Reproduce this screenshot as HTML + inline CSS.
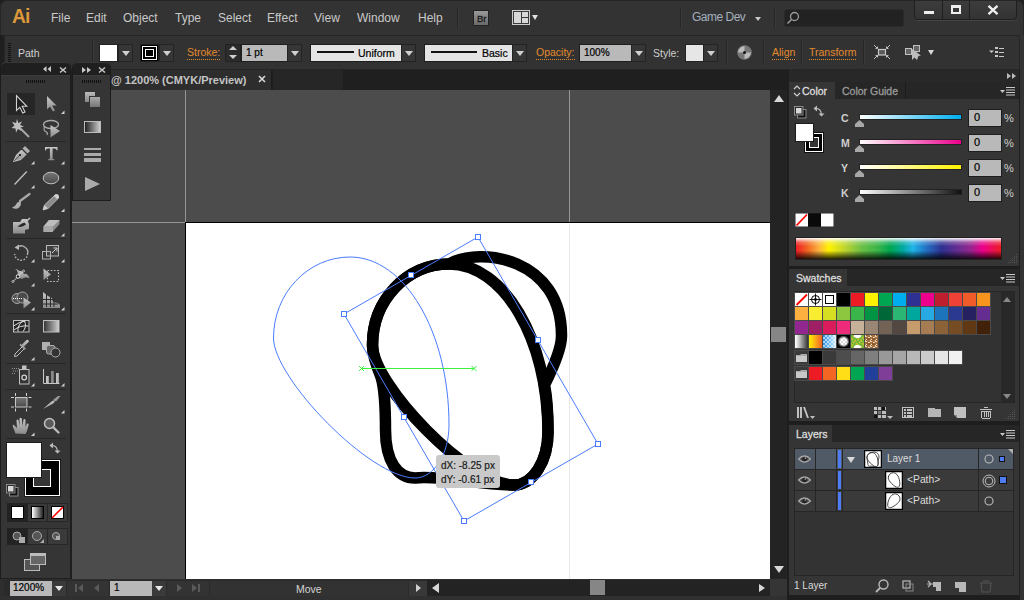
<!DOCTYPE html>
<html><head><meta charset="utf-8">
<style>
*{margin:0;padding:0;box-sizing:border-box}
html,body{width:1024px;height:600px;overflow:hidden;background:#1f1f1f;font-family:"Liberation Sans",sans-serif;font-size:11px;color:#d6d6d6}
.a{position:absolute}
.t{position:absolute;white-space:nowrap;line-height:1}
.m{font-size:12px;color:#c9c9c9;top:12px}
.sep{position:absolute;width:1px;background:#262626;box-shadow:1px 0 0 #3a3a3a}
.dd{position:absolute;width:15px;height:18px;background:#363636;border:1px solid #232323}
.dd:after{content:"";position:absolute;left:3px;top:6px;border-left:4px solid transparent;border-right:4px solid transparent;border-top:5px solid #d0d0d0}
.or{color:#e48a2e;border-bottom:1px dotted #e48a2e;padding-bottom:1px;font-size:10.5px!important}
.inp{position:absolute;height:18px;background:#b9b9b9;border:1px solid #1e1e1e;color:#000;font-size:10px;padding:3px 0 0 4px;line-height:1;-webkit-text-stroke:0.2px #000}
.ic{position:absolute}
</style></head><body>
<!-- APP BAR -->
<div class="a" style="left:0;top:0;width:1024px;height:35px;background:#333;border-radius:7px 7px 0 0;border:1px solid #262626;border-bottom:none"></div>
<div class="t" style="left:12px;top:5px;font-size:21px;font-weight:bold;color:#dc983a;letter-spacing:-1px;transform:scaleX(0.92);transform-origin:left">Ai</div>
<div class="t m" style="left:51px">File</div>
<div class="t m" style="left:86px">Edit</div>
<div class="t m" style="left:123px">Object</div>
<div class="t m" style="left:175px">Type</div>
<div class="t m" style="left:218px">Select</div>
<div class="t m" style="left:267px">Effect</div>
<div class="t m" style="left:314px">View</div>
<div class="t m" style="left:357px">Window</div>
<div class="t m" style="left:418px">Help</div>
<div class="sep" style="left:457px;top:8px;height:20px"></div>
<div class="a" style="left:473px;top:10px;width:16px;height:16px;background:linear-gradient(#9a9a9a,#6a6a6a);border:1px solid #222;border-radius:1px"></div>
<div class="t" style="left:477px;top:14px;font-size:9.5px;color:#1a1a1a;-webkit-text-stroke:0.3px #1a1a1a">Br</div>
<div class="a" style="left:512px;top:10px;width:18px;height:15px;border:1px solid #ccc;background:#3a3a3a"></div>
<div class="a" style="left:514px;top:12px;width:7px;height:11px;background:#d8d8d8"></div>
<div class="a" style="left:522px;top:12px;width:6px;height:5px;background:#d8d8d8"></div>
<div class="a" style="left:522px;top:18px;width:6px;height:5px;background:#d8d8d8"></div>
<div class="a" style="left:532px;top:15px;border-left:3.5px solid transparent;border-right:3.5px solid transparent;border-top:5px solid #e0e0e0"></div>
<div class="sep" style="left:680px;top:8px;height:20px"></div>
<div class="t" style="left:692px;top:11px;font-size:12px;color:#a3afbd;letter-spacing:-0.5px">Game Dev</div>
<div class="a" style="left:755px;top:17px;border-left:3.5px solid transparent;border-right:3.5px solid transparent;border-top:4px solid #c8c8c8"></div>
<div class="sep" style="left:774px;top:8px;height:20px"></div>
<div class="a" style="left:784px;top:9px;width:120px;height:18px;background:#222;border-radius:3px;border:1px solid #2a2a2a"></div>
<svg class="ic" style="left:786px;top:11px" width="14" height="14"><circle cx="8.5" cy="5.5" r="4" fill="none" stroke="#9a9a9a" stroke-width="1.3"/><line x1="5.5" y1="8.5" x2="1.5" y2="12.5" stroke="#9a9a9a" stroke-width="1.6"/></svg>
<div class="a" style="left:914px;top:0px;width:103px;height:20px;background:linear-gradient(#3c3c3c,#333);border:1px solid #1f1f1f;border-top-color:#262626;border-radius:0 0 4px 4px;box-shadow:0 1px 0 #444"></div>
<div class="a" style="left:942px;top:0;width:1px;height:19px;background:#1f1f1f"></div>
<div class="a" style="left:969px;top:0;width:1px;height:19px;background:#1f1f1f"></div>
<div class="a" style="left:924px;top:11px;width:10px;height:3px;background:#eee"></div>
<div class="a" style="left:951px;top:5px;width:10px;height:9px;border:2px solid #eee;border-top-width:3px"></div>
<svg class="ic" style="left:987px;top:5px" width="12" height="10"><path d="M1.5 0.8 L10.5 9.2 M10.5 0.8 L1.5 9.2" stroke="#eee" stroke-width="2.3"/></svg>
<!-- CONTROL BAR -->
<div class="a" style="left:4px;top:35px;width:1016px;height:35px;background:#323232;border:1px solid #262626"></div>
<div class="a" style="left:8px;top:43px;width:3px;height:20px;background:repeating-linear-gradient(#111 0 1px,transparent 1px 2px)"></div>
<div class="t" style="left:18px;top:48px;font-size:10.5px;color:#cfcfcf">Path</div>
<div class="sep" style="left:92px;top:40px;height:25px"></div>
<div class="a" style="left:99px;top:44px;width:19px;height:18px;background:#fff;border:1px solid #222"></div>
<div class="dd" style="left:118px;top:44px"></div>
<div class="a" style="left:140px;top:44px;width:19px;height:18px;background:#000;border:1px solid #222"></div>
<div class="a" style="left:142px;top:46px;width:15px;height:14px;border:1px solid #fff"></div>
<div class="a" style="left:145px;top:49px;width:9px;height:8px;border:1px solid #fff"></div>
<div class="dd" style="left:159px;top:44px"></div>
<div class="t or" style="left:187px;top:47px;">Stroke:</div>
<div class="a" style="left:225px;top:44px;width:16px;height:18px;background:#2b2b2b;border:1px solid #222"></div>
<div class="a" style="left:229px;top:46px;border-left:4px solid transparent;border-right:4px solid transparent;border-bottom:4px solid #cfcfcf"></div>
<div class="a" style="left:229px;top:55px;border-left:4px solid transparent;border-right:4px solid transparent;border-top:4px solid #cfcfcf"></div>
<div class="inp" style="left:241px;top:44px;width:47px;padding-top:3px">1 pt</div>
<div class="dd" style="left:287px;top:44px"></div>
<div class="a" style="left:310px;top:44px;width:92px;height:18px;background:#e4e4e4;border:1px solid #1e1e1e"></div>
<div class="a" style="left:317px;top:51px;width:37px;height:2px;background:#111"></div>
<div class="t" style="left:358px;top:48px;font-size:10.5px;color:#000;-webkit-text-stroke:0.2px #000">Uniform</div>
<div class="dd" style="left:401px;top:44px"></div>
<div class="a" style="left:424px;top:44px;width:89px;height:18px;background:#e4e4e4;border:1px solid #1e1e1e"></div>
<div class="a" style="left:431px;top:51px;width:46px;height:2px;background:#111"></div>
<div class="t" style="left:482px;top:48px;font-size:10.5px;color:#000;-webkit-text-stroke:0.2px #000">Basic</div>
<div class="dd" style="left:512px;top:44px"></div>
<div class="t or" style="left:536px;top:47px;">Opacity:</div>
<div class="inp" style="left:579px;top:44px;width:53px">100%</div>
<div class="dd" style="left:631px;top:44px"></div>
<div class="t" style="left:653px;top:48px;font-size:10.5px;color:#cfcfcf">Style:</div>
<div class="a" style="left:685px;top:44px;width:19px;height:18px;background:#e6e6e6;border:1px solid #222"></div>
<div class="dd" style="left:703px;top:44px"></div>
<div class="sep" style="left:726px;top:40px;height:25px"></div>
<svg class="ic" style="left:736px;top:44px" width="17" height="17"><defs><radialGradient id="rc"><stop offset="0" stop-color="#333"/><stop offset="1" stop-color="#ddd"/></radialGradient></defs><circle cx="8.5" cy="8.5" r="7" fill="#bbb" stroke="#555"/><path d="M8.5 1.5 A7 7 0 0 1 15.5 8.5 L8.5 8.5Z M8.5 15.5 A7 7 0 0 1 1.5 8.5 L8.5 8.5Z" fill="#777"/><circle cx="8.5" cy="8.5" r="1.5" fill="#111"/></svg>
<div class="sep" style="left:763px;top:40px;height:25px"></div>
<div class="t or" style="left:772px;top:47px;">Align</div>
<div class="sep" style="left:801px;top:40px;height:25px"></div>
<div class="t or" style="left:809px;top:47px;">Transform</div>
<div class="sep" style="left:863px;top:40px;height:25px"></div>
<svg class="ic" style="left:872px;top:43px" width="20" height="18"><rect x="6.5" y="6.5" width="7" height="5.5" fill="#5a5a5a" stroke="#c8c8c8" stroke-width="1.2"/><path d="M2 2 L5.5 5.5 M18 2 L14.5 5.5 M2 16 L5.5 12.5 M18 16 L14.5 12.5" stroke="#c0c0c0" stroke-width="1"/><path d="M3.5 5.5 H5.5 V3.5 M16.5 5.5 H14.5 V3.5 M3.5 12.5 H5.5 V14.5 M16.5 12.5 H14.5 V14.5" stroke="#c0c0c0" stroke-width="1" fill="none"/></svg>
<svg class="ic" style="left:904px;top:44px" width="18" height="17"><rect x="1.5" y="4.5" width="6" height="6" fill="#666" stroke="#c0c0c0"/><rect x="9.5" y="1.5" width="6" height="6" fill="#666" stroke="#c0c0c0"/><path d="M8 5 L8 16 L10.5 13.5 L13 16 L14.5 12 L17 11.5 Z" fill="#bdbdbd"/></svg>
<div class="a" style="left:928px;top:50px;border-left:3.5px solid transparent;border-right:3.5px solid transparent;border-top:5px solid #d8d8d8"></div>
<svg class="ic" style="left:988px;top:46px" width="16" height="12" shape-rendering="crispEdges"><path d="M1 4.5 L6 4.5 L3.5 7Z" fill="#c8c8c8" shape-rendering="auto"/><rect x="7" y="1" width="3" height="2" fill="#c8c8c8"/><rect x="7" y="5" width="3" height="2" fill="#c8c8c8"/><rect x="7" y="9" width="3" height="2" fill="#c8c8c8"/><rect x="11" y="1.5" width="5" height="1" fill="#c8c8c8"/><rect x="11" y="5.5" width="5" height="1" fill="#c8c8c8"/><rect x="11" y="9.5" width="5" height="1" fill="#c8c8c8"/></svg>
<!-- TAB BAR -->
<div class="a" style="left:72px;top:70px;width:715px;height:20px;background:#1f1f1f"></div>
<div class="a" style="left:72px;top:70px;width:200px;height:20px;background:#2d2d2d;border-right:1px solid #1b1b1b"></div>
<div class="a" style="left:273px;top:70px;width:70px;height:20px;background:#262626"></div>
<div class="t" style="left:111px;top:75px;font-size:11px;font-weight:bold;color:#c4c4c4">@ 1200% (CMYK/Preview)</div>
<svg class="ic" style="left:258px;top:75px" width="8" height="8"><path d="M1 1 L7 7 M7 1 L1 7" stroke="#d8d8d8" stroke-width="1.6"/></svg>
<!-- CANVAS -->
<div class="a" style="left:72px;top:90px;width:698px;height:489px;background:#4c4c4c;overflow:hidden">
  <div class="a" style="left:113px;top:132px;width:585px;height:357px;background:#fff;border-left:1px solid #000;border-top:1px solid #000"></div>
  <div class="a" style="left:113px;top:0;width:1px;height:132px;background:#959595"></div>
  <div class="a" style="left:0;top:132px;width:113px;height:1px;background:#959595"></div>
  <div class="a" style="left:497px;top:0;width:1px;height:132px;background:#959595"></div>
  <div class="a" style="left:497px;top:134px;width:1px;height:356px;background:#e8e8e8"></div>
</div>
<!-- VSCROLL -->
<div class="a" style="left:770px;top:90px;width:17px;height:489px;background:#232323"></div>
<div class="a" style="left:774px;top:95px;border-left:5px solid transparent;border-right:5px solid transparent;border-bottom:7px solid #d8d8d8"></div>
<div class="a" style="left:771px;top:327px;width:15px;height:15px;background:#868686"></div>
<div class="a" style="left:774px;top:566px;border-left:5px solid transparent;border-right:5px solid transparent;border-top:7px solid #d8d8d8"></div>
<!-- STATUS BAR -->
<div class="a" style="left:0;top:579px;width:787px;height:21px;background:#2e2e2e"></div>
<div class="a" style="left:0;top:596px;width:1024px;height:4px;background:#303030"></div>
<div class="a" style="left:4px;top:580px;width:423px;height:16px;background:#2a2a2a"></div>
<div class="inp" style="left:10px;top:581px;width:42px;height:15px;padding:2px 0 0 3px;border:none">1200%</div>
<div class="a" style="left:52px;top:581px;width:14px;height:15px;background:#3a3a3a"></div>
<div class="a" style="left:55px;top:586px;border-left:4px solid transparent;border-right:4px solid transparent;border-top:5px solid #e8e8e8"></div>
<div class="a" style="left:67px;top:581px;width:42px;height:15px;background:#333"></div>
<div class="a" style="left:75px;top:584px;width:2px;height:8px;background:#5a5a5a"></div>
<div class="a" style="left:78px;top:584px;border-top:4px solid transparent;border-bottom:4px solid transparent;border-right:5px solid #5a5a5a"></div>
<div class="a" style="left:94px;top:584px;border-top:4px solid transparent;border-bottom:4px solid transparent;border-right:5px solid #5a5a5a"></div>
<div class="inp" style="left:110px;top:581px;width:42px;height:15px;padding:2px 0 0 4px;border:none">1</div>
<div class="a" style="left:152px;top:581px;width:14px;height:15px;background:#3a3a3a"></div>
<div class="a" style="left:155px;top:586px;border-left:4px solid transparent;border-right:4px solid transparent;border-top:5px solid #e8e8e8"></div>
<div class="a" style="left:167px;top:581px;width:42px;height:15px;background:#333"></div>
<div class="a" style="left:177px;top:584px;border-top:4px solid transparent;border-bottom:4px solid transparent;border-left:5px solid #5a5a5a"></div>
<div class="a" style="left:192px;top:584px;border-top:4px solid transparent;border-bottom:4px solid transparent;border-left:5px solid #5a5a5a"></div>
<div class="a" style="left:198px;top:584px;width:2px;height:8px;background:#5a5a5a"></div>
<div class="a" style="left:210px;top:581px;width:198px;height:15px;background:#323232"></div>
<div class="t" style="left:296px;top:584px;font-size:10.5px;color:#d4d4d4">Move</div>
<div class="a" style="left:409px;top:581px;width:18px;height:15px;background:#383838"></div>
<div class="a" style="left:416px;top:584px;border-top:4px solid transparent;border-bottom:4px solid transparent;border-left:5px solid #cfcfcf"></div>
<div class="a" style="left:427px;top:580px;width:343px;height:16px;background:#232323"></div>
<div class="a" style="left:432px;top:583px;border-top:5px solid transparent;border-bottom:5px solid transparent;border-right:7px solid #d8d8d8"></div>
<div class="a" style="left:590px;top:580px;width:15px;height:15px;background:#868686"></div>
<div class="a" style="left:759px;top:584px;border-top:4px solid transparent;border-bottom:4px solid transparent;border-left:6px solid #d8d8d8"></div>
<div class="a" style="left:770px;top:579px;width:17px;height:17px;background:#353535"></div>
<svg class="a" style="left:72px;top:90px" width="698" height="489"><g transform="translate(-72,-90)">
<path d="M449 264 C480 246 562 258 561.5 336 C561.5 350 552 370 544.5 385 C546.5 395 548 418 548 432 C548 461.3 532.8 485 514 485 C480 485 440 475 415 478 C398 478 385.5 462 385.5 430 C385.5 408 385 390 381 377 C376 365 372.5 355 372.5 345 C372.5 300 406.8 264 449 264 Z" fill="none" stroke="#000" stroke-width="11.5"/>
<path d="M350 257 C404.7 257 449 332 449 425 C449 454.3 433.8 478 415 478 C370 478 273.5 378 273.5 338 C273.5 293.3 307.8 257 350 257 Z" transform="translate(99,7)" fill="none" stroke="#000" stroke-width="11.5"/>
<path d="M350 257 C404.7 257 449 332 449 425 C449 454.3 433.8 478 415 478 C370 478 273.5 378 273.5 338 C273.5 293.3 307.8 257 350 257 Z" fill="none" stroke="#4a7cff" stroke-width="1"/>
<path d="M344 314 L478 237 L598 444 L464 521Z" fill="none" stroke="#4a7cff" stroke-width="1"/>
<rect x="341.5" y="311.5" width="5" height="5" fill="#fff" stroke="#4a7cff" stroke-width="1"/>
<rect x="475.5" y="234.5" width="5" height="5" fill="#fff" stroke="#4a7cff" stroke-width="1"/>
<rect x="595.5" y="441.5" width="5" height="5" fill="#fff" stroke="#4a7cff" stroke-width="1"/>
<rect x="461.5" y="518.5" width="5" height="5" fill="#fff" stroke="#4a7cff" stroke-width="1"/>
<rect x="408.5" y="272.5" width="5" height="5" fill="#fff" stroke="#4a7cff" stroke-width="1"/>
<rect x="535.5" y="337.5" width="5" height="5" fill="#fff" stroke="#4a7cff" stroke-width="1"/>
<rect x="528.5" y="479.5" width="5" height="5" fill="#fff" stroke="#4a7cff" stroke-width="1"/>
<rect x="401.5" y="414.5" width="5" height="5" fill="#fff" stroke="#4a7cff" stroke-width="1"/>
<path d="M361 368.5 H474 M359 366 L364 371 M364 366 L359 371 M471.5 366 L476.5 371 M476.5 366 L471.5 371" stroke="#3cf03c" stroke-width="1"/>
</g></svg>
<div class="a" style="left:436px;top:455px;width:64px;height:33px;background:#c9c9c9;border-radius:3px"></div>
<div class="t" style="left:441px;top:459px;font-size:10px;color:#1a1a1a;line-height:14px;-webkit-text-stroke:0.2px #1a1a1a">dX: -8.25 px<br>dY: -0.61 px</div><!-- TOOLS PANEL -->
<div class="a" style="left:0;top:62px;width:71px;height:516px;background:#353535;border-right:1px solid #1c1c1c;border-left:1px solid #1c1c1c;border-radius:5px 5px 0 0"></div>
<div class="a" style="left:1px;top:62px;width:69px;height:14px;background:#1f1f1f;border-radius:5px 5px 0 0;border-top:1px solid #383838;border-bottom:1px solid #3c3c3c"></div>
<svg class="ic" style="left:43px;top:66px" width="8" height="6"><path d="M3.5 0 L0 3 L3.5 6Z M8 0 L4.5 3 L8 6Z" fill="#c8c8c8"/></svg>
<svg class="ic" style="left:59px;top:66px" width="8" height="8"><path d="M1 1.5 L7 6.5 M7 1.5 L1 6.5" stroke="#c8c8c8" stroke-width="1.5"/></svg>
<div class="a" style="left:26px;top:80px;width:19px;height:3px;background:repeating-linear-gradient(90deg,#111 0 1px,transparent 1px 2px)"></div>
<div class="a" style="left:7px;top:93px;width:28px;height:22px;background:#262626"></div>
<svg class="a" style="left:0;top:0" width="70" height="440" fill="none" stroke="#b8b8b8" stroke-width="1.2">
  <defs>
    <linearGradient id="gg" x1="0" y1="0" x2="0" y2="1"><stop offset="0" stop-color="#c8c8c8"/><stop offset="1" stop-color="#8a8a8a"/></linearGradient>
    <linearGradient id="gd" x1="0" y1="0" x2="0" y2="1"><stop offset="0" stop-color="#777"/><stop offset="1" stop-color="#4a4a4a"/></linearGradient>
    <linearGradient id="tg" x1="0" x2="1"><stop offset="0" stop-color="#333"/><stop offset="1" stop-color="#d0d0d0"/></linearGradient>
  </defs>
  <g fill="#d0d0d0" stroke="none">
    <path d="M61 114 L64.5 114 L64.5 110.5Z"/>
    <path d="M31 164.5 L34.5 164.5 L34.5 161Z M61 164.5 L64.5 164.5 L64.5 161Z"/>
    <path d="M31 188.5 L34.5 188.5 L34.5 185Z M61 188.5 L64.5 188.5 L64.5 185Z"/>
    <path d="M61 212 L64.5 212 L64.5 208.5Z"/>
    <path d="M61 236.5 L64.5 236.5 L64.5 233Z"/>
    <path d="M31 262.5 L34.5 262.5 L34.5 259Z M61 262.5 L64.5 262.5 L64.5 259Z"/>
    <path d="M31 286.5 L34.5 286.5 L34.5 283Z"/>
    <path d="M31 310.5 L34.5 310.5 L34.5 307Z M61 310.5 L64.5 310.5 L64.5 307Z"/>
    <path d="M31 360.5 L34.5 360.5 L34.5 357Z"/>
    <path d="M31 386.5 L34.5 386.5 L34.5 383Z M61 386.5 L64.5 386.5 L64.5 383Z"/>
    <path d="M61 413.5 L64.5 413.5 L64.5 410Z"/>
    <path d="M31 436 L34.5 436 L34.5 432.5Z"/>
  </g>
  <g stroke="#262626" stroke-width="1"><path d="M6 141.5 H66 M6 238.5 H66 M6 313.5 H66 M6 363.5 H66 M6 389.5 H66"/></g>
  <!-- selection -->
  <path d="M16.5 95.5 L16.5 110.5 L19.8 107.3 L22.8 113 L25 112 L22.2 106.3 L26.8 106.3 Z" stroke="#d0d0d0" fill="#1e1e1e" stroke-width="1.1"/>
  <path d="M47 96 L47 109.5 L50 106.5 L53 111.5 L55 110.5 L52 105.5 L56.5 105.5 Z" fill="url(#gg)" stroke="none"/>
  <!-- magic wand -->
  <path d="M19 127 L29 137" stroke="#a8a8a8" stroke-width="2"/>
  <path d="M17 119 L18.3 123 L22 121.5 L20 125 L24 126.5 L20 127.5 L21.5 131 L18 129 L16 132.5 L15.5 128.5 L11.5 128 L14.5 125.5 L12 122 L16 123Z" fill="#c0c0c0" stroke="none"/>
  <!-- lasso -->
  <ellipse cx="51" cy="124.5" rx="7.5" ry="4" stroke="#a8a8a8" stroke-width="1.4"/>
  <path d="M44.5 126.5 Q43 131 46.5 132 Q48 133 47 135" stroke="#a8a8a8" stroke-width="1.2"/>
  <path d="M50.5 125 L50.5 137.5 L60 131Z" fill="url(#gg)" stroke="none"/>
  <!-- pen -->
  <path d="M13.5 161.5 L16.5 155 L21.5 150 L26 154.5 L21 159.5 Z" fill="url(#gg)" stroke="#ddd" stroke-width="0.8"/>
  <path d="M22.5 148.5 L25 146 L30 151 L27.5 153.5Z" fill="#b0b0b0" stroke="none"/>
  <path d="M14 161 L19.5 155.5" stroke="#444" stroke-width="0.8"/>
  <circle cx="20" cy="155" r="1.1" fill="#111" stroke="none"/>
  <!-- type -->
  <path d="M45 147 H57.5 V150.5 H56.8 Q56.3 148.6 54.5 148.6 H52.6 V158.6 Q52.6 159.3 54.3 159.3 V160.3 H48.2 V159.3 Q49.9 159.3 49.9 158.6 V148.6 H48 Q46.2 148.6 45.7 150.5 H45Z" fill="url(#gg)" stroke="none"/>
  <!-- line -->
  <path d="M14.5 184.5 L26.8 171.5" stroke="#c0c0c0" stroke-width="1.3"/>
  <!-- ellipse -->
  <ellipse cx="51" cy="178" rx="7.8" ry="5.8" fill="url(#gd)" stroke="#c0c0c0" stroke-width="1"/>
  <!-- brush -->
  <path d="M20 201 L29.5 194" stroke="#a8a8a8" stroke-width="2.2" stroke-linecap="round"/>
  <path d="M12 207.5 Q15.5 206.5 17 203 Q19 201 21 202.5 Q21 207 17.5 208.5 Q14.5 209.3 12 207.5Z" fill="#b0b0b0" stroke="none"/>
  <!-- pencil -->
  <path d="M43 210 L44.5 205 L55.5 194.5 L58.8 197.8 L48 208.5Z" fill="#8c8c8c" stroke="#c0c0c0" stroke-width="0.9"/>
  <path d="M54 196 L55.5 194.5 Q57 193.5 58.3 194.7 Q59.5 196.2 58.8 197.8 L57.3 199.3Z" fill="#d0d0d0" stroke="none"/>
  <path d="M43 210 L44.5 205 L48 208.5Z" fill="#ccc" stroke="none"/>
  <!-- blob brush -->
  <path d="M13 222 L20 222 L22 219 L27 219 L29 224 L29 229 L25 230 L25 233.5 L13 233.5Z" fill="url(#gg)" stroke="none"/>
  <path d="M17.5 226.5 Q22 223 24.5 222.5 L26 224.5 Q22 228 17.5 226.5Z" fill="#2a2a2a" stroke="none"/>
  <path d="M25 222.5 L30 218" stroke="#c0c0c0" stroke-width="1.6"/>
  <!-- eraser -->
  <path d="M43.5 226.5 L49 220 L59.5 220 L59.5 224 L52.5 232 L43.5 232Z" fill="#8c8c8c" stroke="none"/>
  <path d="M43.5 226.5 L49 220 L59.5 220 L53 226.5Z" fill="#bdbdbd" stroke="none"/>
  <path d="M43.5 226.5 H53 V232 H43.5Z" fill="#a8a8a8" stroke="none"/>
  <!-- rotate -->
  <path d="M17 247.5 A6.5 6.5 0 0 1 27.2 255" stroke="#b0b0b0" stroke-width="1.3"/>
  <path d="M27 256.5 A6.5 6.5 0 0 1 14.6 254" stroke="#b0b0b0" stroke-width="1.5" stroke-dasharray="1.6 1.6"/>
  <path d="M14.5 247.5 L19 244.5 L19 250Z" fill="#b8b8b8" stroke="none"/>
  <!-- scale -->
  <rect x="46.5" y="245.5" width="12" height="10.5" fill="#404040" stroke="#b8b8b8" stroke-width="1"/>
  <rect x="42.5" y="251.5" width="8" height="7.5" stroke="#b0b0b0" stroke-width="1"/>
  <path d="M52 253 L56.5 248.5 M53.5 248 H57 V251.5" stroke="#d0d0d0" stroke-width="1"/>
  <!-- warp -->
  <path d="M14.5 271 Q17 268 17.5 272 Q18.5 278 22 279 Q26 276.5 29.5 278.5 Q28 273 24 274 Q22 270 19 271 Q16.5 267.5 14.5 271Z" fill="url(#gg)" stroke="none"/>
  <path d="M13 281.5 L23.5 271" stroke="#ddd" stroke-width="0.9"/>
  <circle cx="18" cy="276.5" r="1.8" fill="#222" stroke="#eee" stroke-width="1"/>
  <circle cx="13" cy="281.5" r="1" fill="#222" stroke="#ddd" stroke-width="0.8"/>
  <circle cx="23.5" cy="271" r="1" fill="#222" stroke="#ddd" stroke-width="0.8"/>
  <!-- free transform -->
  <path d="M43.5 268.5 L43.5 280 L51 274.5Z" fill="url(#gg)" stroke="none"/>
  <rect x="47.5" y="270.5" width="11" height="11" stroke="#c0c0c0" stroke-width="1.1" stroke-dasharray="1.6 1.6"/>
  <!-- shape builder -->
  <circle cx="17" cy="298.5" r="5" fill="#555" stroke="#a8a8a8" stroke-width="1"/>
  <circle cx="22.5" cy="297.5" r="5.5" fill="#4a4a4a" stroke="#a8a8a8" stroke-width="1"/>
  <path d="M13 298.5 H22" stroke="#fff" stroke-width="1" stroke-dasharray="1 1"/>
  <path d="M23.5 297.5 L23.5 308.5 L31 302.5Z" fill="url(#gg)" stroke="none"/>
  <!-- perspective grid -->
  <path d="M43 292 L43 308 L60 308 L60 305 L58 303 L53 302 L52 298 L48 296 Z" fill="url(#gg)" stroke="none"/>
  <path d="M46.5 293 V307 M50.5 295 V307 M54 298 V307 M43 299.5 H53 M43 304 H58" stroke="#2c2c2c" stroke-width="1"/>
  <!-- mesh -->
  <rect x="13.5" y="320.5" width="15.5" height="11.5" fill="#262626" stroke="#c0c0c0" stroke-width="1"/>
  <path d="M13.5 326 Q19 322 25 321 M14 330 Q20 325 28.5 326 M18 331.5 Q17 326 23 320.5 M23 331.5 Q27 327 24.5 320.5" stroke="#e0e0e0" stroke-width="1"/>
  <!-- gradient -->
  <rect x="43.5" y="320.5" width="15.5" height="11.5" fill="url(#tg)" stroke="#c0c0c0" stroke-width="1"/>
  <!-- eyedropper -->
  <path d="M14.5 356.5 L15 354 L22.5 346.5 L24.5 348.5 L17 356 Z" fill="#333" stroke="#d0d0d0" stroke-width="0.9"/>
  <path d="M21 345.5 L25.5 350 M22.5 344.5 L27 340 Q28.5 339.5 29 341 L24.5 346" stroke="none" fill="none"/>
  <path d="M21.5 345 L26.5 340 Q28.5 339 29 341.5 L24 346.5 L26 348.5 L24.5 350 L19.5 345 L21 343.5Z" fill="url(#gg)" stroke="none"/>
  <!-- blend -->
  <rect x="42" y="342" width="8" height="8" fill="#b0b0b0" stroke="none"/>
  <rect x="46.5" y="345.5" width="8.5" height="8.5" rx="2" fill="#666" stroke="#b0b0b0" stroke-width="1"/>
  <circle cx="55.5" cy="352.5" r="4.5" fill="#333" stroke="#b0b0b0" stroke-width="1"/>
  <!-- symbol sprayer -->
  <rect x="19.5" y="369.5" width="9.5" height="14.5" fill="#353535" stroke="#c0c0c0" stroke-width="1"/>
  <rect x="22" y="365.5" width="4.5" height="3.5" fill="#c0c0c0" stroke="none"/>
  <circle cx="24.2" cy="377.5" r="2.3" stroke="#d0d0d0" stroke-width="1.3"/>
  <path d="M12 368.5 H20 M13 371 H19 M12 373.5 H16" stroke="#a0a0a0" stroke-width="0.9" stroke-dasharray="1 1"/>
  <!-- column graph -->
  <path d="M43.5 369 V383.5 H59.5" stroke="#c8c8c8" stroke-width="1"/>
  <rect x="46" y="376" width="2.8" height="7" fill="#c0c0c0" stroke="none"/>
  <rect x="51" y="371" width="2.8" height="12" fill="#888" stroke="none"/>
  <rect x="56" y="373" width="2.8" height="10" fill="#c0c0c0" stroke="none"/>
  <!-- artboard -->
  <rect x="15.5" y="397.5" width="11.5" height="9.5" fill="url(#gd)" stroke="#c8c8c8" stroke-width="1"/>
  <path d="M15.5 393 V396 M26.5 393 V396 M15.5 408.5 V411.5 M26.5 408.5 V411.5 M11 397.5 H14 M28.5 397.5 H31.5 M11 407 H14 M28.5 407 H31.5" stroke="#d0d0d0" stroke-width="1"/>
  <!-- slice -->
  <path d="M43 409 L52 401 L55 400 L54 403 Z" fill="#b8b8b8" stroke="none"/>
  <path d="M53 400 L58 396 L60.5 396 L56 401.5Z" fill="#999" stroke="none"/>
  <!-- hand -->
  <path d="M15.5 433.5 L13 427 Q12 425 13.5 424.5 L17 428 L16.5 420.5 Q17 419 18.5 420 L19.5 426 L19.5 418.5 Q20.5 417 21.8 418.5 L22.5 426 L23.5 419.5 Q24.8 418.5 25.5 420 L25.5 427 L27 423.5 Q28.5 423 28.8 424.5 L27 431 L25.5 434Z" fill="url(#gg)" stroke="none"/>
  <!-- zoom -->
  <circle cx="49.5" cy="423.5" r="5" fill="#5a5a5a" stroke="#c0c0c0" stroke-width="1.5"/>
  <path d="M53.3 427.3 L58.5 432.5" stroke="#b8b8b8" stroke-width="2.4" stroke-linecap="round"/>
</svg>
<div class="a" style="left:6px;top:438px;width:60px;height:1px;background:#262626"></div>
<!-- fill / stroke -->
<div class="a" style="left:25px;top:460px;width:35px;height:36px;background:#000;border:1.5px solid #fff;box-shadow:0 0 0 1px #1c1c1c"></div>
<div class="a" style="left:33px;top:469px;width:18px;height:18px;background:#353535;border:1.5px solid #fff"></div>
<div class="a" style="left:6px;top:442px;width:36px;height:36px;background:#fff;border:1px solid #1c1c1c"></div>
<svg class="ic" style="left:49px;top:442px" width="12" height="12"><path d="M1.5 3.5 Q8 3 8.5 9.5" fill="none" stroke="#bbb" stroke-width="1.3"/><path d="M0.5 3.5 L4 0.5 L4 6.5Z M5.5 8.5 L11.5 8.5 L8.5 11.5Z" fill="#bbb"/></svg>
<svg class="ic" style="left:6px;top:484px" width="13" height="13"><rect x="3.5" y="3.5" width="8.5" height="8.5" fill="#111" stroke="#8a8a8a"/><rect x="0.5" y="0.5" width="8.5" height="8.5" fill="#2a2a2a" stroke="#8a8a8a"/><rect x="2" y="2" width="5.5" height="5.5" fill="#d8d8d8"/></svg>
<!-- color buttons -->
<div class="a" style="left:7px;top:503px;width:61px;height:19px;background:#262626"></div>
<div class="a" style="left:7px;top:503px;width:20px;height:19px;background:#222"></div>
<div class="a" style="left:28px;top:504px;width:19px;height:17px;background:#3a3a3a"></div>
<div class="a" style="left:48px;top:504px;width:19px;height:17px;background:#3a3a3a"></div>
<div class="a" style="left:11px;top:506px;width:13px;height:13px;background:#fff;border:1px solid #000"></div>
<div class="a" style="left:31px;top:506px;width:13px;height:13px;background:linear-gradient(90deg,#fff,#222);border:1px solid #000"></div>
<svg class="ic" style="left:51px;top:506px" width="13" height="13"><rect x="0.5" y="0.5" width="12" height="12" fill="#fff" stroke="#000"/><path d="M1 12 L12 1" stroke="#f00" stroke-width="1.6"/></svg>
<!-- drawing modes -->
<div class="a" style="left:7px;top:528px;width:61px;height:17px;background:#262626"></div>
<div class="a" style="left:7px;top:528px;width:20px;height:17px;background:#222"></div>
<div class="a" style="left:28px;top:529px;width:19px;height:15px;background:#3a3a3a"></div>
<div class="a" style="left:48px;top:529px;width:19px;height:15px;background:#3a3a3a"></div>
<svg class="ic" style="left:12px;top:530px" width="55" height="14"><circle cx="5" cy="6" r="4" fill="#555" stroke="#aaa"/><rect x="7" y="7" width="6" height="6" fill="#aaa"/><circle cx="25" cy="6" r="4.5" fill="#555" stroke="#aaa"/><path d="M28 13 L32 13 L32 9Z" fill="#aaa"/><circle cx="44" cy="6" r="3.5" fill="#555" stroke="#aaa"/><rect x="44" y="6" width="4" height="4" fill="#aaa"/></svg>
<svg class="ic" style="left:24px;top:553px" width="22" height="18"><rect x="0.5" y="6.5" width="15" height="11" fill="#555" stroke="#bbb"/><rect x="6.5" y="0.5" width="15" height="11" fill="#666" stroke="#bbb"/><rect x="7" y="1" width="14" height="2" fill="#bbb"/></svg>
<!-- FLYOUT -->
<div class="a" style="left:72px;top:62px;width:39px;height:139px;background:#353535;border:1px solid #1c1c1c;border-radius:5px 5px 0 0"></div>
<div class="a" style="left:73px;top:62px;width:37px;height:14px;background:#1f1f1f;border-radius:5px 5px 0 0;border-top:1px solid #383838;border-bottom:1px solid #3c3c3c"></div>
<svg class="ic" style="left:82px;top:67px" width="9" height="6"><path d="M0 0 L4 3 L0 6Z M5 0 L9 3 L5 6Z" fill="#c8c8c8"/></svg>
<svg class="ic" style="left:98px;top:66px" width="8" height="8"><path d="M1 1.5 L7 6.5 M7 1.5 L1 6.5" stroke="#c8c8c8" stroke-width="1.5"/></svg>
<div class="a" style="left:82px;top:80px;width:19px;height:3px;background:repeating-linear-gradient(90deg,#111 0 1px,transparent 1px 2px)"></div>
<div class="a" style="left:85px;top:92px;width:10px;height:10px;background:linear-gradient(#bbb,#888)"></div>
<div class="a" style="left:90px;top:97px;width:10px;height:10px;background:linear-gradient(#aaa,#777);box-shadow:-1px -1px 0 #353535"></div>
<div class="a" style="left:84px;top:121px;width:17px;height:12px;background:linear-gradient(90deg,#222,#ccc);border:1px solid #bbb"></div>
<div class="a" style="left:84px;top:148px;width:17px;height:2px;background:#aaa"></div>
<div class="a" style="left:84px;top:153px;width:17px;height:3px;background:#aaa"></div>
<div class="a" style="left:84px;top:158px;width:17px;height:4px;background:#aaa"></div>
<div class="a" style="left:85px;top:177px;border-top:7px solid transparent;border-bottom:7px solid transparent;border-left:15px solid #aaa"></div>
<!-- RIGHT PANEL -->
<div class="a" style="left:787px;top:70px;width:237px;height:530px;background:#1e1e1e"></div>
<div class="a" style="left:1020px;top:35px;width:4px;height:565px;background:#333"></div>
<div class="a" style="left:789px;top:70px;width:230px;height:12px;background:#282828"></div>
<svg class="ic" style="left:1007px;top:73px" width="9" height="6"><path d="M0 0 L4 3 L0 6Z M5 0 L9 3 L5 6Z" fill="#bbb"/></svg>
<!-- color panel -->
<div class="a" style="left:789px;top:82px;width:230px;height:184px;background:#353535"></div>
<div class="a" style="left:835px;top:82px;width:184px;height:17px;background:#262626"></div>
<div class="a" style="left:905px;top:82px;width:1px;height:17px;background:#1c1c1c"></div>
<svg class="ic" style="left:793px;top:85px" width="8" height="12"><path d="M1 4 L4 1 L7 4 M1 8 L4 11 L7 8" fill="none" stroke="#cfcfcf" stroke-width="1.2"/></svg>
<div class="t" style="left:802px;top:86px;font-size:10.5px;font-weight:normal;color:#dedede;-webkit-text-stroke:0.3px #dedede">Color</div>
<div class="t" style="left:842px;top:86px;font-size:10.5px;color:#9a9a9a;-webkit-text-stroke:0.3px #9a9a9a">Color Guide</div>
<svg class="ic" style="left:1000px;top:87px" width="16" height="9"><path d="M0 3 L5 3 L2.5 6Z" fill="#c8c8c8"/><path d="M6 0.5 H15 M6 3 H15 M6 5.5 H15 M6 8 H15" stroke="#c8c8c8" stroke-width="1.1"/></svg>
<svg class="ic" style="left:794px;top:106px" width="13" height="13"><rect x="3.5" y="3.5" width="8.5" height="8.5" fill="#111" stroke="#8a8a8a"/><rect x="0.5" y="0.5" width="8.5" height="8.5" fill="#2a2a2a" stroke="#8a8a8a"/><rect x="2" y="2" width="5.5" height="5.5" fill="#d8d8d8"/></svg>
<svg class="ic" style="left:813px;top:105px" width="12" height="12"><path d="M1.5 3.5 Q8 3 8.5 9.5" fill="none" stroke="#bbb" stroke-width="1.3"/><path d="M0.5 3.5 L4 0.5 L4 6.5Z M5.5 8.5 L11.5 8.5 L8.5 11.5Z" fill="#bbb"/></svg>
<div class="a" style="left:805px;top:133px;width:18px;height:19px;background:#000;border:1.5px solid #fff;box-shadow:0 0 0 1px #111"></div>
<div class="a" style="left:809px;top:137px;width:10px;height:11px;background:#353535;border:1.5px solid #fff"></div>
<div class="a" style="left:795px;top:123px;width:19px;height:19px;background:#fff;border:1px solid #1c1c1c"></div>
<div class="t" style="left:841px;top:113px;font-size:10.5px;font-weight:bold;color:#cfcfcf">C</div>
<div class="a" style="left:859px;top:114px;width:103px;height:6px;background:linear-gradient(90deg,#fff,#00aeef);border:1px solid #222"></div>
<svg class="ic" style="left:855px;top:120px" width="9" height="7"><path d="M4.5 0 L9 4 L9 7 L0 7 L0 4Z" fill="#a8a8a8"/></svg>
<div class="inp" style="left:968px;top:109px;width:34px;padding:2px 0 0 5px;font-size:11px">0</div>
<div class="t" style="left:1004px;top:113px;font-size:11px;color:#d0d0d0">%</div>
<div class="t" style="left:841px;top:138px;font-size:10.5px;font-weight:bold;color:#cfcfcf">M</div>
<div class="a" style="left:859px;top:139px;width:103px;height:6px;background:linear-gradient(90deg,#fff,#ec008c);border:1px solid #222"></div>
<svg class="ic" style="left:855px;top:145px" width="9" height="7"><path d="M4.5 0 L9 4 L9 7 L0 7 L0 4Z" fill="#a8a8a8"/></svg>
<div class="inp" style="left:968px;top:134px;width:34px;padding:2px 0 0 5px;font-size:11px">0</div>
<div class="t" style="left:1004px;top:138px;font-size:11px;color:#d0d0d0">%</div>
<div class="t" style="left:841px;top:163px;font-size:10.5px;font-weight:bold;color:#cfcfcf">Y</div>
<div class="a" style="left:859px;top:164px;width:103px;height:6px;background:linear-gradient(90deg,#fff,#fff200);border:1px solid #222"></div>
<svg class="ic" style="left:855px;top:170px" width="9" height="7"><path d="M4.5 0 L9 4 L9 7 L0 7 L0 4Z" fill="#a8a8a8"/></svg>
<div class="inp" style="left:968px;top:159px;width:34px;padding:2px 0 0 5px;font-size:11px">0</div>
<div class="t" style="left:1004px;top:163px;font-size:11px;color:#d0d0d0">%</div>
<div class="t" style="left:841px;top:188px;font-size:10.5px;font-weight:bold;color:#cfcfcf">K</div>
<div class="a" style="left:859px;top:189px;width:103px;height:6px;background:linear-gradient(90deg,#fff,#111111);border:1px solid #222"></div>
<svg class="ic" style="left:855px;top:195px" width="9" height="7"><path d="M4.5 0 L9 4 L9 7 L0 7 L0 4Z" fill="#a8a8a8"/></svg>
<div class="inp" style="left:968px;top:184px;width:34px;padding:2px 0 0 5px;font-size:11px">0</div>
<div class="t" style="left:1004px;top:188px;font-size:11px;color:#d0d0d0">%</div>
<svg class="ic" style="left:795px;top:213px" width="39" height="14"><rect x="0" y="0" width="39" height="14" fill="#222"/><rect x="0.5" y="0.5" width="12.5" height="13" fill="#fff"/><path d="M1.5 12.5 L12 1.5" stroke="#f00" stroke-width="1.8"/><rect x="13" y="0.5" width="13" height="13" fill="#0a0a0a"/><rect x="26" y="0.5" width="12.5" height="13" fill="#fff"/></svg>
<div class="a" style="left:795px;top:237px;width:207px;height:23px;background:#000;border:1px solid #222"></div>
<div class="a" style="left:796px;top:238px;width:205px;height:21px;background:linear-gradient(90deg,#ed1c24,#f26b22 6%,#fbb040 11%,#fff200 16%,#bdd530 24%,#6cbf45 32%,#39b54a 40%,#00a651 46%,#00a99d 52%,#1fb5e8 57%,#2277c8 63%,#2e3192 71%,#662d91 79%,#92278f 85%,#ec008c 91%,#ed1c24)"></div>
<div class="a" style="left:796px;top:238px;width:205px;height:21px;background:linear-gradient(rgba(255,255,255,.95),rgba(255,255,255,.25) 20%,rgba(255,255,255,0) 40%,rgba(0,0,0,0) 60%,rgba(0,0,0,.85))"></div><!-- swatches panel -->
<div class="a" style="left:789px;top:269px;width:230px;height:152px;background:#353535"></div>
<div class="a" style="left:847px;top:269px;width:172px;height:17px;background:#262626"></div>
<div class="t" style="left:796px;top:273px;font-size:10.5px;color:#dedede;-webkit-text-stroke:0.3px #dedede">Swatches</div>
<svg class="ic" style="left:1000px;top:274px" width="16" height="9"><path d="M0 3 L5 3 L2.5 6Z" fill="#c8c8c8"/><path d="M6 0.5 H15 M6 3 H15 M6 5.5 H15 M6 8 H15" stroke="#c8c8c8" stroke-width="1.1"/></svg>
<div class="a" style="left:794px;top:291px;width:221px;height:112px;background:#323232;border:1px solid #262626"></div>
<div class="a" style="left:1001px;top:292px;width:13px;height:110px;background:#282828"></div>
<div class="a" style="left:1003px;top:297px;border-left:4px solid transparent;border-right:4px solid transparent;border-bottom:5px solid #888"></div>
<div class="a" style="left:1003px;top:394px;border-left:4px solid transparent;border-right:4px solid transparent;border-top:5px solid #888"></div>
<div class="a" style="left:794px;top:292px;width:197px;height:15px;background:#4a4a4a"></div>
<svg class="ic" style="left:795px;top:293px" width="13" height="13"><rect width="13" height="13" fill="#fff"/><path d="M1.5 12 L12 1.5" stroke="#f00" stroke-width="1.8"/></svg>
<svg class="ic" style="left:809px;top:293px" width="13" height="13"><rect width="13" height="13" fill="#fff"/><circle cx="6.5" cy="6.5" r="4" fill="none" stroke="#000"/><circle cx="6.5" cy="6.5" r="1.2" fill="none" stroke="#000" stroke-width=".8"/><path d="M6.5 0.5 V12.5 M0.5 6.5 H12.5" stroke="#000" stroke-width=".9"/></svg>
<div class="a" style="left:823px;top:293px;width:13px;height:13px;background:#fff"></div><div class="a" style="left:825px;top:295px;width:9px;height:9px;border:1.5px solid #000"></div>
<div class="a" style="left:837px;top:293px;width:13px;height:13px;background:#000000"></div>
<div class="a" style="left:851px;top:293px;width:13px;height:13px;background:#ed1c24"></div>
<div class="a" style="left:865px;top:293px;width:13px;height:13px;background:#fff200"></div>
<div class="a" style="left:879px;top:293px;width:13px;height:13px;background:#00a651"></div>
<div class="a" style="left:893px;top:293px;width:13px;height:13px;background:#00aeef"></div>
<div class="a" style="left:907px;top:293px;width:13px;height:13px;background:#2e3192"></div>
<div class="a" style="left:921px;top:293px;width:13px;height:13px;background:#ec008c"></div>
<div class="a" style="left:935px;top:293px;width:13px;height:13px;background:#be1e2d"></div>
<div class="a" style="left:949px;top:293px;width:13px;height:13px;background:#ef4136"></div>
<div class="a" style="left:963px;top:293px;width:13px;height:13px;background:#f15a29"></div>
<div class="a" style="left:977px;top:293px;width:13px;height:13px;background:#f7941d"></div>
<div class="a" style="left:794px;top:306px;width:197px;height:15px;background:#4a4a4a"></div>
<div class="a" style="left:795px;top:307px;width:13px;height:13px;background:#fbb040"></div>
<div class="a" style="left:809px;top:307px;width:13px;height:13px;background:#f9ed32"></div>
<div class="a" style="left:823px;top:307px;width:13px;height:13px;background:#d7df23"></div>
<div class="a" style="left:837px;top:307px;width:13px;height:13px;background:#8dc63f"></div>
<div class="a" style="left:851px;top:307px;width:13px;height:13px;background:#39b54a"></div>
<div class="a" style="left:865px;top:307px;width:13px;height:13px;background:#009444"></div>
<div class="a" style="left:879px;top:307px;width:13px;height:13px;background:#006838"></div>
<div class="a" style="left:893px;top:307px;width:13px;height:13px;background:#2bb673"></div>
<div class="a" style="left:907px;top:307px;width:13px;height:13px;background:#00a79d"></div>
<div class="a" style="left:921px;top:307px;width:13px;height:13px;background:#27aae1"></div>
<div class="a" style="left:935px;top:307px;width:13px;height:13px;background:#1c75bc"></div>
<div class="a" style="left:949px;top:307px;width:13px;height:13px;background:#2b3990"></div>
<div class="a" style="left:963px;top:307px;width:13px;height:13px;background:#262262"></div>
<div class="a" style="left:977px;top:307px;width:13px;height:13px;background:#662d91"></div>
<div class="a" style="left:794px;top:320px;width:197px;height:15px;background:#4a4a4a"></div>
<div class="a" style="left:795px;top:321px;width:13px;height:13px;background:#92278f"></div>
<div class="a" style="left:809px;top:321px;width:13px;height:13px;background:#9e1f63"></div>
<div class="a" style="left:823px;top:321px;width:13px;height:13px;background:#da1c5c"></div>
<div class="a" style="left:837px;top:321px;width:13px;height:13px;background:#ee2a7b"></div>
<div class="a" style="left:851px;top:321px;width:13px;height:13px;background:#c7b299"></div>
<div class="a" style="left:865px;top:321px;width:13px;height:13px;background:#998675"></div>
<div class="a" style="left:879px;top:321px;width:13px;height:13px;background:#736357"></div>
<div class="a" style="left:893px;top:321px;width:13px;height:13px;background:#534741"></div>
<div class="a" style="left:907px;top:321px;width:13px;height:13px;background:#c69c6d"></div>
<div class="a" style="left:921px;top:321px;width:13px;height:13px;background:#a67c52"></div>
<div class="a" style="left:935px;top:321px;width:13px;height:13px;background:#8c6239"></div>
<div class="a" style="left:949px;top:321px;width:13px;height:13px;background:#754c24"></div>
<div class="a" style="left:963px;top:321px;width:13px;height:13px;background:#603813"></div>
<div class="a" style="left:977px;top:321px;width:13px;height:13px;background:#42210b"></div>
<div class="a" style="left:794px;top:334px;width:85px;height:15px;background:#4a4a4a"></div>
<div class="a" style="left:795px;top:335px;width:13px;height:13px;background:linear-gradient(90deg,#fff,#e8e8e8 15%,#555 85%,#333)"></div>
<div class="a" style="left:809px;top:335px;width:13px;height:13px;background:linear-gradient(90deg,#fff200,#fdc010 35%,#f7941d 65%,#f26522)"></div>
<div class="a" style="left:823px;top:335px;width:13px;height:13px;background:repeating-conic-gradient(rgba(255,255,255,.55) 0 25%,transparent 0 50%) 0 0/4px 4px,linear-gradient(90deg,#2f8fe0,#7cc4f0 60%,#d8f0ff)"></div>
<div class="a" style="left:837px;top:335px;width:13px;height:13px;background:repeating-conic-gradient(rgba(0,0,0,.15) 0 25%,transparent 0 50%) 0 0/4px 4px,radial-gradient(circle,#fff 0,#fff 38%,#777 52%,#000 66%)"></div>
<div class="a" style="left:851px;top:335px;width:13px;height:13px;background:radial-gradient(ellipse 40% 22% at 50% 8%,#fff 60%,transparent 70%),radial-gradient(ellipse 40% 22% at 50% 92%,#fff 60%,transparent 70%),repeating-conic-gradient(#f2c230 0 12%,#5cb83a 0 25%) 50% 50%/6px 6px"></div>
<div class="a" style="left:865px;top:335px;width:13px;height:13px;background:repeating-conic-gradient(#a8703a 0 20%,#e6d2b8 0 30%,#8b5a30 0 55%,#f2e8dc 0 62%) 0 0/5px 5px"></div>
<div class="a" style="left:794px;top:350px;width:169px;height:15px;background:#4a4a4a"></div>
<div class="a" style="left:795px;top:351px;width:13px;height:13px;background:#3a3a3a"></div><svg class="ic" style="left:795px;top:351px" width="13" height="13"><path d="M1 4 L5 4 L6 3 L12 3 L12 11 L1 11Z" fill="#aaa"/><rect x="1" y="5" width="11" height="6" fill="#c8c8c8"/></svg>
<div class="a" style="left:809px;top:351px;width:13px;height:13px;background:#000000"></div>
<div class="a" style="left:823px;top:351px;width:13px;height:13px;background:#3a3a3a"></div>
<div class="a" style="left:837px;top:351px;width:13px;height:13px;background:#4d4d4d"></div>
<div class="a" style="left:851px;top:351px;width:13px;height:13px;background:#666666"></div>
<div class="a" style="left:865px;top:351px;width:13px;height:13px;background:#7f7f7f"></div>
<div class="a" style="left:879px;top:351px;width:13px;height:13px;background:#999999"></div>
<div class="a" style="left:893px;top:351px;width:13px;height:13px;background:#a6a6a6"></div>
<div class="a" style="left:907px;top:351px;width:13px;height:13px;background:#b8b8b8"></div>
<div class="a" style="left:921px;top:351px;width:13px;height:13px;background:#cccccc"></div>
<div class="a" style="left:935px;top:351px;width:13px;height:13px;background:#e6e6e6"></div>
<div class="a" style="left:949px;top:351px;width:13px;height:13px;background:#f2f2f2"></div>
<div class="a" style="left:794px;top:366px;width:99px;height:15px;background:#4a4a4a"></div>
<div class="a" style="left:795px;top:367px;width:13px;height:13px;background:#3a3a3a"></div><svg class="ic" style="left:795px;top:367px" width="13" height="13"><path d="M1 4 L5 4 L6 3 L12 3 L12 11 L1 11Z" fill="#aaa"/><rect x="1" y="5" width="11" height="6" fill="#c8c8c8"/></svg>
<div class="a" style="left:809px;top:367px;width:13px;height:13px;background:#ed1c24"></div>
<div class="a" style="left:823px;top:367px;width:13px;height:13px;background:#f26522"></div>
<div class="a" style="left:837px;top:367px;width:13px;height:13px;background:#ffde17"></div>
<div class="a" style="left:851px;top:367px;width:13px;height:13px;background:#00a651"></div>
<div class="a" style="left:865px;top:367px;width:13px;height:13px;background:#21409a"></div>
<div class="a" style="left:879px;top:367px;width:13px;height:13px;background:#7f3f98"></div><svg class="ic" style="left:790px;top:404px" width="234" height="18" shape-rendering="crispEdges">
  <g fill="#c0c0c0">
    <rect x="7" y="3" width="2" height="11"/><rect x="10" y="3" width="2" height="11"/>
    <path d="M13 3 L15 3 L19 14 L17 14Z" shape-rendering="auto"/>
    <path d="M20 12 L25 12 L22.5 15Z" shape-rendering="auto"/>
    <rect x="84" y="3" width="12" height="11" fill="#bdbdbd"/>
    <path d="M84 6.5 H96 M84 10.5 H96 M87.5 3 V14 M91.5 3 V14" stroke="#353535" stroke-width="1" fill="none"/>
    <rect x="92" y="3" width="3" height="3" fill="#111"/><rect x="84" y="11" width="3" height="3" fill="#111"/><rect x="88" y="7" width="3" height="3" fill="#777"/>
    <path d="M97 12 L103 12 L100 15Z" shape-rendering="auto"/>
    <rect x="112.5" y="3.5" width="11" height="10" fill="none" stroke="#c0c0c0"/>
    <rect x="114" y="5" width="2" height="1.5"/><rect x="117" y="5" width="5" height="1.5"/>
    <rect x="114" y="8" width="2" height="1.5"/><rect x="117" y="8" width="5" height="1.5"/>
    <rect x="114" y="11" width="2" height="1.5"/><rect x="117" y="11" width="5" height="1.5"/>
    <path d="M138 5 L138 13 L151 13 L151 5 L145 5 L143.5 3.5 L139 3.5Z" fill="#b5b5b5"/>
    <path d="M164 3 H176 V14 H167 V11 H164Z" fill="#c0c0c0"/><path d="M164 11 L167 14 L167 11Z" fill="#888" shape-rendering="auto"/>
    <path d="M190 5.5 H202 M194 3.5 H198 M191 7 L192 14 H200 L201 7Z M194 8 V13 M196 8 V13 M198 8 V13" stroke="#c0c0c0" stroke-width="1" fill="none"/>
  </g>
  <g fill="#555"><rect x="224" y="6" width="1" height="1"/><rect x="222" y="8" width="1" height="1"/><rect x="224" y="8" width="1" height="1"/><rect x="220" y="10" width="1" height="1"/><rect x="222" y="10" width="1" height="1"/><rect x="224" y="10" width="1" height="1"/><rect x="218" y="12" width="1" height="1"/><rect x="220" y="12" width="1" height="1"/><rect x="222" y="12" width="1" height="1"/><rect x="224" y="12" width="1" height="1"/><rect x="216" y="14" width="1" height="1"/><rect x="218" y="14" width="1" height="1"/><rect x="220" y="14" width="1" height="1"/><rect x="222" y="14" width="1" height="1"/><rect x="224" y="14" width="1" height="1"/></g>
</svg>
<svg class="ic" style="left:1006px;top:252px" width="12" height="12" shape-rendering="crispEdges" fill="#555"><rect x="10" y="2" width="1" height="1"/><rect x="8" y="4" width="1" height="1"/><rect x="10" y="4" width="1" height="1"/><rect x="6" y="6" width="1" height="1"/><rect x="8" y="6" width="1" height="1"/><rect x="10" y="6" width="1" height="1"/><rect x="4" y="8" width="1" height="1"/><rect x="6" y="8" width="1" height="1"/><rect x="8" y="8" width="1" height="1"/><rect x="10" y="8" width="1" height="1"/><rect x="2" y="10" width="1" height="1"/><rect x="4" y="10" width="1" height="1"/><rect x="6" y="10" width="1" height="1"/><rect x="8" y="10" width="1" height="1"/><rect x="10" y="10" width="1" height="1"/></svg>
<!-- layers panel -->
<div class="a" style="left:789px;top:425px;width:230px;height:170px;background:#353535"></div>
<div class="a" style="left:832px;top:425px;width:187px;height:17px;background:#262626"></div>
<div class="t" style="left:796px;top:429px;font-size:10.5px;color:#dedede;-webkit-text-stroke:0.3px #dedede">Layers</div>
<svg class="ic" style="left:1000px;top:430px" width="16" height="9"><path d="M0 3 L5 3 L2.5 6Z" fill="#c8c8c8"/><path d="M6 0.5 H15 M6 3 H15 M6 5.5 H15 M6 8 H15" stroke="#c8c8c8" stroke-width="1.1"/></svg>
<div class="a" style="left:794px;top:448px;width:220px;height:128px;background:#333;border:1px solid #262626"></div>
<div class="a" style="left:795px;top:449px;width:218px;height:20px;background:#505a67"></div>
<div class="a" style="left:795px;top:470px;width:218px;height:20px;background:#3a3a3a"></div>
<div class="a" style="left:795px;top:491px;width:218px;height:20px;background:#3a3a3a"></div>
<div class="a" style="left:795px;top:469px;width:218px;height:1px;background:#262626"></div>
<div class="a" style="left:795px;top:490px;width:218px;height:1px;background:#262626"></div>
<div class="a" style="left:795px;top:511px;width:218px;height:1px;background:#262626"></div>
<div class="a" style="left:815px;top:449px;width:1px;height:62px;background:#262626"></div>
<div class="a" style="left:836px;top:449px;width:1px;height:62px;background:#262626"></div>
<div class="a" style="left:842px;top:449px;width:1px;height:62px;background:#262626"></div>
<div class="a" style="left:978px;top:449px;width:1px;height:62px;background:#262626"></div>
<div class="a" style="left:838px;top:450px;width:3px;height:18px;background:#4d7cf5"></div>
<div class="a" style="left:838px;top:471px;width:3px;height:18px;background:#4d7cf5"></div>
<div class="a" style="left:838px;top:492px;width:3px;height:18px;background:#4d7cf5"></div>
<svg class="ic" style="left:798px;top:454px" width="13" height="10"><path d="M0.5 5 Q6.5 -1 12.5 5 Q6.5 11 0.5 5Z" fill="#444" stroke="#a8a8a8" stroke-width="1.3"/><circle cx="6.5" cy="5" r="2.2" fill="#222"/><circle cx="7.3" cy="4" r="0.8" fill="#bbb"/></svg>
<svg class="ic" style="left:798px;top:475px" width="13" height="10"><path d="M0.5 5 Q6.5 -1 12.5 5 Q6.5 11 0.5 5Z" fill="#444" stroke="#a8a8a8" stroke-width="1.3"/><circle cx="6.5" cy="5" r="2.2" fill="#222"/><circle cx="7.3" cy="4" r="0.8" fill="#bbb"/></svg>
<svg class="ic" style="left:798px;top:496px" width="13" height="10"><path d="M0.5 5 Q6.5 -1 12.5 5 Q6.5 11 0.5 5Z" fill="#444" stroke="#a8a8a8" stroke-width="1.3"/><circle cx="6.5" cy="5" r="2.2" fill="#222"/><circle cx="7.3" cy="4" r="0.8" fill="#bbb"/></svg>
<div class="a" style="left:847px;top:457px;border-left:4.5px solid transparent;border-right:4.5px solid transparent;border-top:6px solid #d8d8d8"></div>
<svg class="ic" style="left:864px;top:450px" width="18" height="18"><rect x="0.5" y="0.5" width="17" height="17" fill="#fff" stroke="#000" stroke-width="1.5"/><g transform="translate(9,9.3) scale(0.064) translate(-467,-370)"><path d="M449 264 C480 246 562 258 561.5 336 C561.5 352 552 372 547 391 C545.5 406 548 419 548 432 C548 461.3 532.8 485 514 485 C480 485 440 475 415 478 C398 478 385.5 462 385.5 430 C385.5 400 372.5 376 372.5 345 C372.5 300 406.8 264 449 264 Z" fill="none" stroke="#444" stroke-width="1" vector-effect="non-scaling-stroke"/><path d="M350 257 C404.7 257 449 332 449 425 C449 454.3 433.8 478 415 478 C370 478 273.5 378 273.5 338 C273.5 293.3 307.8 257 350 257 Z" transform="translate(99,7)" fill="none" stroke="#444" stroke-width="1" vector-effect="non-scaling-stroke"/></g></svg>
<svg class="ic" style="left:885px;top:471px" width="18" height="18"><rect x="0.5" y="0.5" width="17" height="17" fill="#fff" stroke="#000" stroke-width="1.5"/><g transform="translate(9,9) scale(0.066) translate(-361,-367.5)"><path d="M350 257 C404.7 257 449 332 449 425 C449 454.3 433.8 478 415 478 C370 478 273.5 378 273.5 338 C273.5 293.3 307.8 257 350 257 Z" fill="none" stroke="#444" stroke-width="1" vector-effect="non-scaling-stroke"/></g></svg>
<svg class="ic" style="left:885px;top:492px" width="18" height="18"><rect x="0.5" y="0.5" width="17" height="17" fill="#fff" stroke="#000" stroke-width="1.5"/><g transform="translate(9,9) scale(-0.066,0.066) rotate(-8) translate(-361,-367.5)"><path d="M350 257 C404.7 257 449 332 449 425 C449 454.3 433.8 478 415 478 C370 478 273.5 378 273.5 338 C273.5 293.3 307.8 257 350 257 Z" fill="none" stroke="#444" stroke-width="1" vector-effect="non-scaling-stroke"/></g></svg>
<div class="t" style="left:887px;top:454px;font-size:10px;color:#dcdcdc">Layer 1</div>
<div class="t" style="left:907px;top:475px;font-size:10.3px;color:#dcdcdc">&lt;Path&gt;</div>
<div class="t" style="left:907px;top:496px;font-size:10.3px;color:#dcdcdc">&lt;Path&gt;</div>
<svg class="ic" style="left:982px;top:452px" width="14" height="14"><circle cx="7" cy="7" r="4" fill="none" stroke="#bbb" stroke-width="1.1"/></svg>
<svg class="ic" style="left:981px;top:473px" width="16" height="16"><circle cx="8" cy="8" r="6" fill="none" stroke="#bbb" stroke-width="1"/><circle cx="8" cy="8" r="3.8" fill="none" stroke="#bbb" stroke-width="1"/></svg>
<svg class="ic" style="left:982px;top:494px" width="14" height="14"><circle cx="7" cy="7" r="4" fill="none" stroke="#bbb" stroke-width="1.1"/></svg>
<div class="a" style="left:999px;top:456px;width:6px;height:6px;background:#4d7cf5;border:1px solid #111"></div>
<div class="a" style="left:999px;top:476px;width:8px;height:8px;background:#4d7cf5;border:1px solid #111"></div>
<svg class="ic" style="left:1008px;top:449px" width="5" height="5"><path d="M0 0 L5 0 L5 5Z" fill="#b0b0b0"/></svg>
<div class="t" style="left:794px;top:581px;font-size:10px;color:#d8d8d8">1 Layer</div>
<svg class="ic" style="left:875px;top:579px" width="120" height="15" fill="none" stroke="#b8b8b8">
<circle cx="8.5" cy="5.5" r="4.5" stroke-width="1.4"/><path d="M5 9 L1 13" stroke-width="1.8"/>
<rect x="28" y="2" width="7" height="7" stroke-width="1.2"/><rect x="31" y="5" width="7" height="7" stroke="#888"/>
<path d="M53 2 L56 5 L53 8 M52 5 H58" stroke-width="1.2"/><path d="M58 3 H66 V12 H61 V8 H58Z" fill="#b8b8b8" stroke="none"/>
<path d="M80 3 H91 V13 H84 V9 H80Z" fill="#b8b8b8" stroke="none"/>
<path d="M105 4 H117 M108 2 H114 M106 4 L107 13 H115 L116 4" stroke="#555"/>
</svg></body></html>
